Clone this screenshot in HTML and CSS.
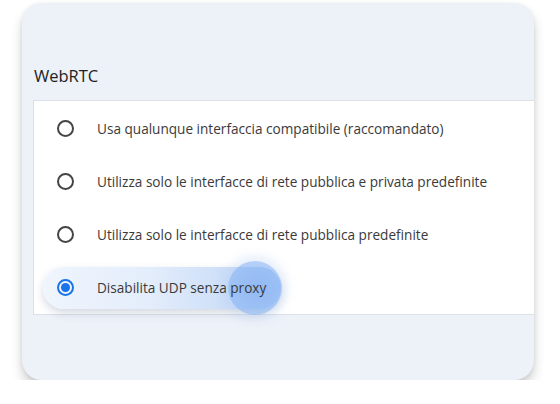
FILE: index.html
```html
<!DOCTYPE html>
<html>
<head>
<meta charset="utf-8">
<link rel="stylesheet" href="styles.css">
</head>
<body>
<div class="card">
  <h2 class="title">WebRTC</h2>
  <div class="panel">
    <div class="row"><span class="opt"><span class="radio"></span><span class="label">Usa qualunque interfaccia compatibile (raccomandato)</span></span></div>
    <div class="row"><span class="opt"><span class="radio"></span><span class="label">Utilizza solo le interfacce di rete pubblica e privata predefinite</span></span></div>
    <div class="row"><span class="opt"><span class="radio"></span><span class="label">Utilizza solo le interfacce di rete pubblica predefinite</span></span></div>
    <div class="row"><span class="opt selected"><span class="ripple"></span><span class="radio on"></span><span class="label">Disabilita UDP senza proxy</span></span></div>
  </div>
</div>
</body>
</html>
```
FILE: styles.css
```css
html, body { margin: 0; padding: 0; background: #ffffff; }
body { font-family: "Open Sans", "Noto Sans", sans-serif; }
.card {
  margin: 3px 0 0 22px;
  width: 512px;
  height: 377px;
  box-sizing: border-box;
  border-radius: 20px;
  background: #edf1f8;
  box-shadow: 0 8px 12px rgba(0,0,0,0.18), 0 1px 5px rgba(0,0,0,0.07);
  overflow: hidden;
  padding: 60px 0 0 11px;
}
.title {
  margin: 0 0 12px 1px;
  font-size: 16.5px;
  font-weight: 500;
  line-height: 25px;
  color: #202124;
}
.panel {
  background: #fff;
  border: 1px solid #dde1e7;
  border-right: none;
  padding-top: 1px;
}
.row {
  height: 53px;
  display: flex;
  align-items: center;
  padding-left: 9px;
}
.opt {
  position: relative;
  display: inline-flex;
  align-items: center;
  height: 42px;
  padding: 0 15px 0 14px;
  border-radius: 21px;
}
.opt.selected {
  background: linear-gradient(90deg, #f0f5fd 0%, #e3edfb 45%, #bcd4f6 100%);
  box-shadow: 0 4px 9px rgba(60,80,120,0.22);
}
.radio {
  position: relative;
  width: 17px;
  height: 17px;
  box-sizing: border-box;
  border: 2.5px solid #454545;
  border-radius: 50%;
  flex: none;
}
.radio.on {
  border-color: #1a73e8;
  border-width: 2px;
}
.radio.on::after {
  content: "";
  position: absolute;
  left: 2px; top: 2px;
  width: 9px; height: 9px;
  border-radius: 50%;
  background: #1a73e8;
}
.label {
  margin-left: 23px;
  font-size: 13.6px;
  color: #3a3a3a;
  white-space: nowrap;
  position: relative;
}
.ripple {
  position: absolute;
  right: -1px;
  top: -6px;
  width: 54px;
  height: 54px;
  border-radius: 50%;
  background: radial-gradient(circle, rgba(125,172,242,0.7) 0%, rgba(135,180,244,0.6) 75%, rgba(160,195,246,0.4) 100%);
  box-shadow: 0 0 8px 6px rgba(170,200,245,0.25);
}
```
